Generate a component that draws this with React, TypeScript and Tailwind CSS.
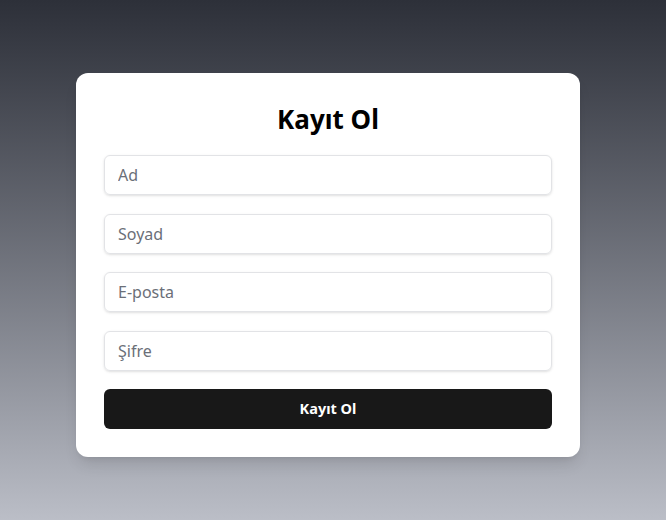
import React from "react";

const fields = ["Ad", "Soyad", "E-posta", "Şifre"];

export default function App() {
  return (
    <div
      className="min-h-[520px] w-full flex items-center justify-center pr-[10px] pt-[10px] bg-gradient-to-b from-[#2d3039] to-[#bbbec7]"
      style={{ fontFamily: '"Noto Sans", "Open Sans", sans-serif' }}
    >
      <div className="w-[504px] bg-white rounded-xl shadow-lg px-7 pt-7 pb-7">
        <h1 className="text-[26px] leading-[36px] font-bold text-black text-center mb-[18px]">
          Kayıt Ol
        </h1>
        <form className="flex flex-col gap-[18.5px]">
          {fields.map((f) => (
            <input
              key={f}
              type={f === "Şifre" ? "password" : "text"}
              placeholder={f}
              className="h-10 w-full rounded-md border border-[#e2e3e6] px-[13px] text-[16px] text-gray-800 placeholder:text-[#6b6f78] shadow-sm outline-none"
            />
          ))}
          <button
            type="button"
            className="h-10 w-full rounded-md bg-[#181818] text-white text-[14.5px] font-bold"
          >
            Kayıt Ol
          </button>
        </form>
      </div>
    </div>
  );
}
